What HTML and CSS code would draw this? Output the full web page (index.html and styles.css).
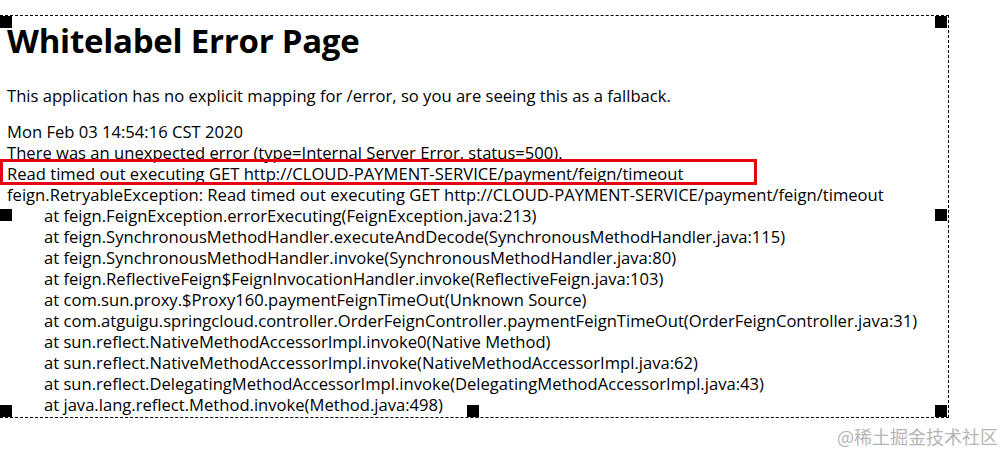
FILE: index.html
```html
<!DOCTYPE html>
<html>
<head>
<title>Error</title>
<link rel="stylesheet" href="styles.css">
</head>
<body>

<div class="frame">
  <h1>Whitelabel Error Page</h1>
  <p class="intro">This application has no explicit mapping for /error, so you are seeing this as a fallback.</p>
  <div class="when">Mon Feb 03 14:54:16 CST 2020</div>
  <div>There was an unexpected error (type=Internal Server Error, status=500).</div>
  <div>Read timed out executing GET http://CLOUD-PAYMENT-SERVICE/payment/feign/timeout</div>
  <div class="trace">feign.RetryableException: Read timed out executing GET http://CLOUD-PAYMENT-SERVICE/payment/feign/timeout
	at feign.FeignException.errorExecuting(FeignException.java:213)
	at feign.SynchronousMethodHandler.executeAndDecode(SynchronousMethodHandler.java:115)
	at feign.SynchronousMethodHandler.invoke(SynchronousMethodHandler.java:80)
	at feign.ReflectiveFeign$FeignInvocationHandler.invoke(ReflectiveFeign.java:103)
	at com.sun.proxy.$Proxy160.paymentFeignTimeOut(Unknown Source)
	at com.atguigu.springcloud.controller.OrderFeignController.paymentFeignTimeOut(OrderFeignController.java:31)
	at sun.reflect.NativeMethodAccessorImpl.invoke0(Native Method)
	at sun.reflect.NativeMethodAccessorImpl.invoke(NativeMethodAccessorImpl.java:62)
	at sun.reflect.DelegatingMethodAccessorImpl.invoke(DelegatingMethodAccessorImpl.java:43)
	at java.lang.reflect.Method.invoke(Method.java:498)</div>

  <!-- marca vermelha sobre a linha da mensagem -->
  <div class="mark"></div>

  <!-- pegas da seleccao -->
  <span class="handle h-tl"></span>
  <span class="handle h-tr"></span>
  <span class="handle h-ml"></span>
  <span class="handle h-mr"></span>
  <span class="handle h-bl"></span>
  <span class="handle h-bm"></span>
  <span class="handle h-br"></span>
</div>

<div class="watermark">@稀土掘金技术社区</div>

</body>
</html>
```

FILE: styles.css
```css
/* styles.css */

body {
  margin: 0;
  background: #fff;
  color: #000;
  font-family: "Open Sans", "Noto Sans", sans-serif;
  font-size: 16.6px;
  line-height: 21px;
}

.frame {
  position: relative;
  margin-top: 15px;
  width: 941px;
  height: 401px;
  padding-left: 7px;
  border: 1px dashed #000;
  border-left: none;
  overflow: hidden;
}

h1 {
  margin: 5px 0 0 0;
  font-size: 33px;
  line-height: 40px;
  font-weight: bold;
  letter-spacing: -0.25px;
}

.intro {
  margin: 24px 0 15px 0;
}

.trace {
  white-space: pre-wrap;
  tab-size: 37px;
}

.mark {
  position: absolute;
  left: 0;
  top: 143px;
  width: 757px;
  height: 26px;
  box-sizing: border-box;
  border: 3px solid #e60012;
}

.handle {
  position: absolute;
  width: 12px;
  height: 12px;
  background: #000;
}
.h-tl { left: 0; top: 0; }
.h-tr { right: 1px; top: 0; }
.h-ml { left: 0; top: 193px; }
.h-mr { right: 1px; top: 193px; }
.h-bl { left: 0; bottom: 0; }
.h-bm { left: 467px; bottom: 0; }
.h-br { right: 1px; bottom: 0; }

.watermark {
  position: absolute;
  right: 5px;
  top: 425px;
  font-family: "Noto Sans CJK SC", sans-serif;
  font-size: 18px;
  line-height: 22px;
  color: #b5b5b5;
}
```
